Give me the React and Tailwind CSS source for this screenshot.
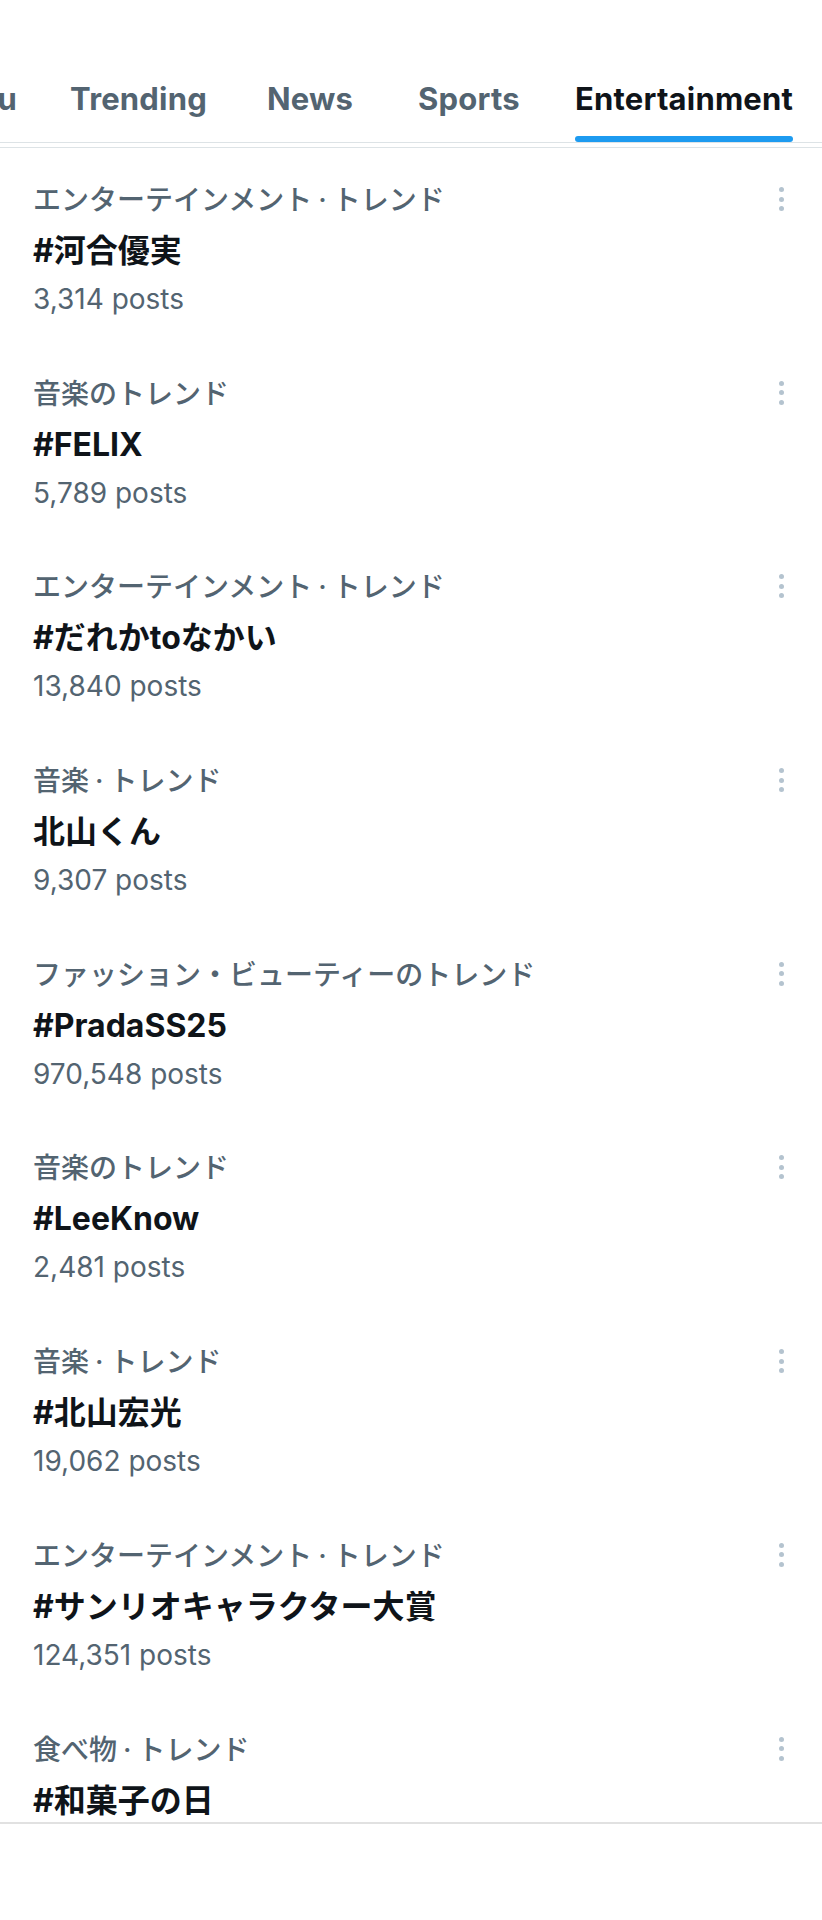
import { useState } from "react";

const trends = [
  { category: "エンターテインメント·トレンド", title: "#河合優実", posts: "3,314 posts" },
  { category: "音楽のトレンド", title: "#FELIX", posts: "5,789 posts" },
  { category: "エンターテインメント·トレンド", title: "#だれかtoなかい", posts: "13,840 posts" },
  { category: "音楽·トレンド", title: "北山くん", posts: "9,307 posts" },
  { category: "ファッション・ビューティーのトレンド", title: "#PradaSS25", posts: "970,548 posts" },
  { category: "音楽のトレンド", title: "#LeeKnow", posts: "2,481 posts" },
  { category: "音楽·トレンド", title: "#北山宏光", posts: "19,062 posts" },
  { category: "エンターテインメント·トレンド", title: "#サンリオキャラクター大賞", posts: "124,351 posts" },
  { category: "食べ物·トレンド", title: "#和菓子の日", posts: "" },
];

// slot widths keep each label where the scrolled tab strip puts it
const tabs = [
  { label: "For you", slot: "w-[270px] justify-end pr-[53px]" },
  { label: "Trending", slot: "w-[197px]" },
  { label: "News", slot: "w-[151px]" },
  { label: "Sports", slot: "w-[157px]" },
  { label: "Entertainment", slot: "" },
];

const font = "font-['Inter','Noto_Sans_CJK_JP',sans-serif]";

export default function App() {
  const [active, setActive] = useState("Entertainment");

  return (
    <div className={`min-h-screen w-[822px] overflow-hidden bg-white ${font}`}>
      <div className="border-b border-[#dde3e6] pb-[4px] pt-[64px]">
        <div className="ml-[-200px] flex items-stretch border-b border-[#dde3e6]">
          {tabs.map((tab) => (
            <TabButton
              key={tab.label}
              label={tab.label}
              slot={tab.slot}
              active={active === tab.label}
              onClick={() => setActive(tab.label)}
            />
          ))}
        </div>
      </div>

      <div className="h-[1676px] overflow-hidden border-b-2 border-[#e1e1e1]">
        {trends.map((t) => (
          <TrendItem key={t.title} {...t} />
        ))}
      </div>
    </div>
  );
}

function TabButton({ label, slot, active, onClick }) {
  return (
    <button onClick={onClick} className={`flex shrink-0 ${slot}`}>
      <span className="flex flex-col items-stretch">
        <span
          className={`whitespace-nowrap text-[31px] font-bold leading-[70px] tracking-[0.2px] ${
            active ? "text-[#0f1419]" : "text-[#536471]"
          }`}
        >
          {label}
        </span>
        <span className={`mt-[2px] h-[6px] rounded-full ${active ? "bg-[#1d9bf0]" : "bg-transparent"}`} />
      </span>
    </button>
  );
}

function Category({ text }) {
  const parts = text.split("·");
  return (
    <div className="font-medium text-[28px] leading-[48px] text-[#536471]">
      {parts.map((p, i) => (
        <span key={i}>
          {i > 0 && <span className="mx-[6px]">·</span>}
          {p}
        </span>
      ))}
    </div>
  );
}

function TrendItem({ category, title, posts }) {
  return (
    <div className="relative h-[193.7px] pl-[33px] pr-[40px] pt-[28px]">
      <Category text={category} />
      <div className="text-[32px] font-bold leading-[54px] text-[#0f1419]">{title}</div>
      {posts && <div className="text-[28px] leading-[42px] text-[#536471]">{posts}</div>}
      <button className="absolute right-[36px] top-[37px] flex flex-col items-center gap-[4.5px] p-[2px]">
        <span className="h-[5px] w-[5px] rounded-full bg-[#b4c3cf]" />
        <span className="h-[5px] w-[5px] rounded-full bg-[#b4c3cf]" />
        <span className="h-[5px] w-[5px] rounded-full bg-[#b4c3cf]" />
      </button>
    </div>
  );
}
